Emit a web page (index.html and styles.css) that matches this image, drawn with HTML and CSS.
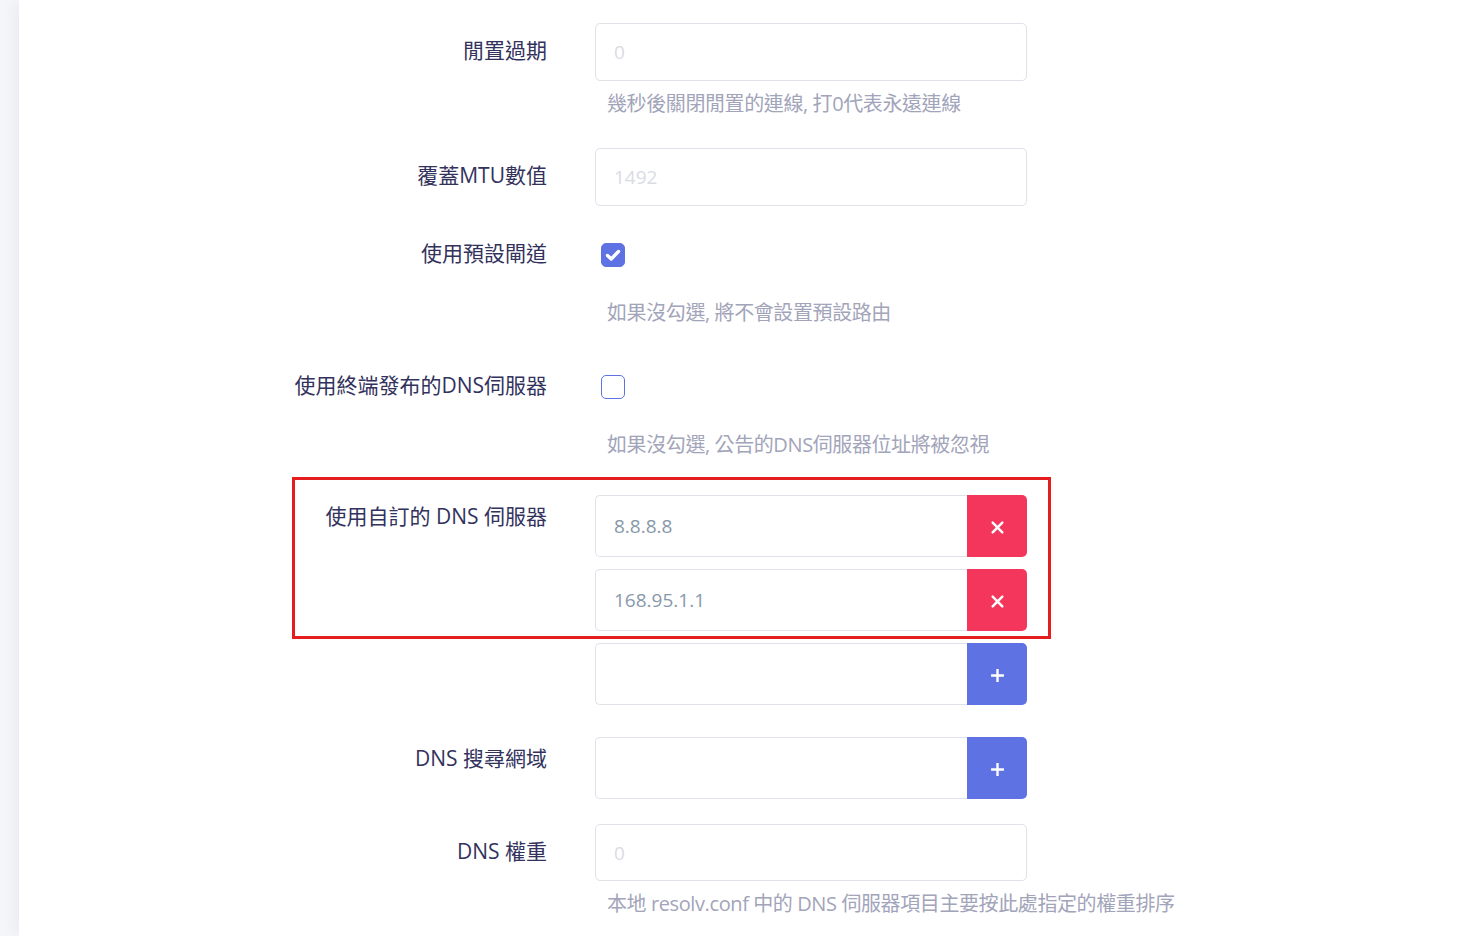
FILE: index.html
```html
<!DOCTYPE html>
<html lang="zh-Hant">
<head>
<meta charset="utf-8">
<title>DNS 設定</title>
<link rel="stylesheet" href="styles.css">
</head>
<body>
<div class="page">
  <div class="panel">
    <div class="row r1">
      <label class="lbl lbl-in">閒置過期</label>
      <div class="field">
        <input class="ctl" type="text" placeholder="0">
        <div class="help">幾秒後關閉閒置的連線, 打0代表永遠連線</div>
      </div>
    </div>

    <div class="row r2">
      <label class="lbl lbl-in">覆蓋MTU數值</label>
      <div class="field">
        <input class="ctl" type="text" placeholder="1492">
      </div>
    </div>

    <div class="row r3">
      <label class="lbl">使用預設閘道</label>
      <div class="field">
        <div class="cbwrap"><span class="cb on"><svg viewBox="0 0 24 24" width="24" height="24"><path d="M6.5 12.5 L10.2 16 L17.5 8.5" fill="none" stroke="#fff" stroke-width="3.4" stroke-linecap="round" stroke-linejoin="round"/></svg></span></div>
        <div class="help help-cb">如果沒勾選, 將不會設置預設路由</div>
      </div>
    </div>

    <div class="row r4">
      <label class="lbl">使用終端發布的DNS伺服器</label>
      <div class="field">
        <div class="cbwrap"><span class="cb"></span></div>
        <div class="help help-cb">如果沒勾選, 公告的DNS伺服器位址將被忽視</div>
      </div>
    </div>

    <div class="row r5">
      <div class="mark"></div>
      <label class="lbl lbl-grp">使用自訂的 DNS 伺服器</label>
      <div class="field list">
        <div class="grp">
          <input class="ctl ctl-g" type="text" value="8.8.8.8">
          <button class="btn del" type="button"><svg viewBox="0 0 14 14" width="15" height="15"><path d="M2.5 2.5 L11.5 11.5 M11.5 2.5 L2.5 11.5" stroke="#fff" stroke-width="2.3" stroke-linecap="round"/></svg></button>
        </div>
        <div class="grp">
          <input class="ctl ctl-g" type="text" value="168.95.1.1">
          <button class="btn del" type="button"><svg viewBox="0 0 14 14" width="15" height="15"><path d="M2.5 2.5 L11.5 11.5 M11.5 2.5 L2.5 11.5" stroke="#fff" stroke-width="2.3" stroke-linecap="round"/></svg></button>
        </div>
        <div class="grp">
          <input class="ctl ctl-g" type="text">
          <button class="btn add" type="button"><svg viewBox="0 0 14 14" width="15" height="15"><path d="M7 1 V13 M1 7 H13" stroke="#fff" stroke-width="2.2"/></svg></button>
        </div>
      </div>
    </div>

    <div class="row r6">
      <label class="lbl lbl-grp">DNS 搜尋網域</label>
      <div class="field">
        <div class="grp">
          <input class="ctl ctl-g" type="text">
          <button class="btn add" type="button"><svg viewBox="0 0 14 14" width="15" height="15"><path d="M7 1 V13 M1 7 H13" stroke="#fff" stroke-width="2.2"/></svg></button>
        </div>
      </div>
    </div>

    <div class="row r7">
      <label class="lbl lbl-in">DNS 權重</label>
      <div class="field">
        <input class="ctl ctl-w" type="text" placeholder="0">
        <div class="help">本地 resolv.conf 中的 DNS 伺服器項目主要按此處指定的權重排序</div>
      </div>
    </div>
  </div>
</div>
</body>
</html>
```

FILE: styles.css
```css
* { box-sizing: border-box; }
html, body { margin: 0; padding: 0; }
body {
  width: 1464px;
  height: 936px;
  overflow: hidden;
  background: #f6f7fa;
  font-family: "Open Sans", "Noto Sans CJK TC", sans-serif;
}
.page {
  height: 100%;
  padding-left: 19px;
}
.panel {
  height: 100%;
  background: #fff;
  box-shadow: -6px 0 14px rgba(140, 150, 180, 0.10);
  padding-top: 23px;
}
.row {
  position: relative;
  display: grid;
  grid-template-columns: 528px 432px;
  column-gap: 48px;
  align-items: start;
}
.lbl {
  display: block;
  text-align: right;
  color: #32325d;
  font-size: 21px;
  line-height: 30px;
  white-space: nowrap;
}
.lbl-in { padding-top: 12px; }
.lbl-grp { padding-top: 6px; }
.field { display: flex; flex-direction: column; }
.ctl {
  display: block;
  width: 432px;
  height: 58px;
  border: 1px solid #dfe2e8;
  border-radius: 5px;
  padding: 0 18px;
  font-family: inherit;
  font-size: 19px;
  color: #8898aa;
  background: #fff;
  outline: none;
}
.ctl::placeholder { color: #d9dce4; }
.help {
  margin-top: 8px;
  padding-left: 12px;
  color: #a2a4ba;
  font-size: 20px;
  line-height: 30px;
  white-space: nowrap;
  letter-spacing: -0.4px;
}
.help-cb { margin-top: 30px; }
.cbwrap {
  height: 30px;
  display: flex;
  align-items: center;
  padding-left: 6px;
  padding-top: 4px;
}
.cb {
  width: 24px;
  height: 24px;
  border-radius: 5px;
  border: 1px solid #5e72e4;
  background: #fff;
  display: block;
}
.cb.on { background: #5e72e4; }
.cb svg { display: block; margin: -1px; }

.r2 { margin-top: 29px; }
.r3 { margin-top: 32px; }
.r4 { margin-top: 42px; }
.r5 { margin-top: 35px; }
.r6 { margin-top: 32px; }
.r7 { margin-top: 25px; }

.list { gap: 12px; }
.grp {
  display: flex;
  width: 432px;
  height: 62px;
}
.ctl-g {
  flex: 1;
  width: auto;
  height: 62px;
  border-radius: 5px 0 0 5px;
  border-right: none;
}
.ctl-w { height: 57px; }
.btn {
  width: 60px;
  height: 62px;
  border: none;
  border-radius: 0 5px 5px 0;
  display: flex;
  align-items: center;
  justify-content: center;
  padding: 2px 0 0;
}
.btn svg { display: block; }
.del { background: #f5365c; }
.add { background: #5e72e4; }

.mark {
  position: absolute;
  left: 273px;
  top: -18px;
  width: 759px;
  height: 162px;
  border: 3px solid #e41e1e;
  pointer-events: none;
}
```
